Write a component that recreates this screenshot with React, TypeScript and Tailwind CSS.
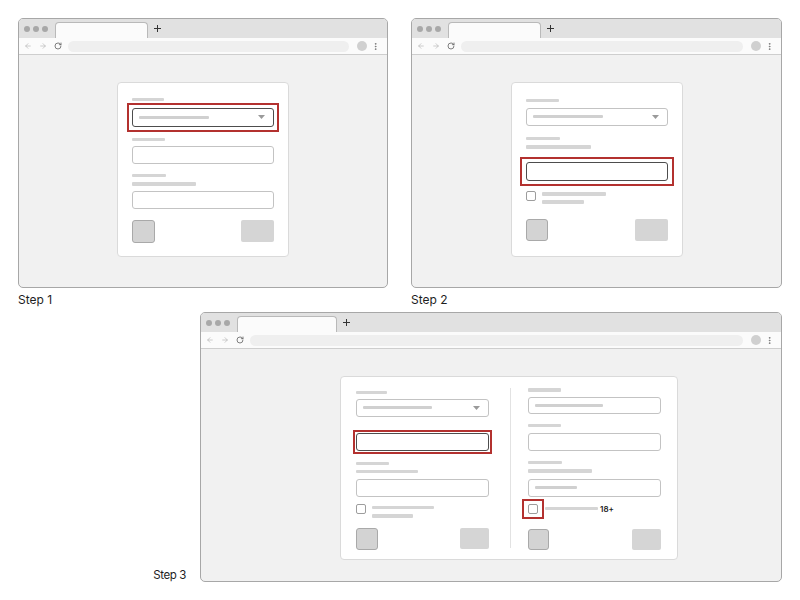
import type { ReactNode } from "react";
import { ArrowLeft, ArrowRight, RotateCw, EllipsisVertical } from "lucide-react";
import clsx from "clsx";

function Bar({ className }: { className: string }) {
  return <div className={clsx("rounded-[1px] bg-[#d5d5d5]", className)} />;
}

// sharp red highlight frame drawn around a control, without moving the flow
function Mark({ className, children }: { className: string; children: ReactNode }) {
  return <div className={clsx("border-2 border-[#b3312f]", className)}>{children}</div>;
}

function Field({
  className,
  dark,
  fill,
  select,
}: {
  className?: string;
  dark?: boolean;
  fill?: string;
  select?: boolean;
}) {
  return (
    <div
      className={clsx(
        "flex w-full items-center rounded-[3px] border bg-white pl-[6px] pr-[8px]",
        dark ? "border-[#4d4d4d]" : "border-[#c3c3c3]",
        className,
      )}
    >
      {fill ? <div className={clsx("h-[3px] rounded-[1px] bg-[#d0d0d0]", fill)} /> : null}
      {select ? (
        <svg className="ml-auto" width="7" height="4" viewBox="0 0 7 4">
          <path d="M0 0 L7 0 L3.5 4 Z" fill="#9a9a9a" />
        </svg>
      ) : null}
    </div>
  );
}

function Check({ className }: { className?: string }) {
  return <div className={clsx("h-[10px] w-[10px] shrink-0 rounded-[2px] border border-[#9d9d9d] bg-white", className)} />;
}

function Buttons({ className, left, right }: { className: string; left: string; right: string }) {
  return (
    <div className={clsx("flex items-start justify-between", className)}>
      <div className={clsx("rounded-[3px] border border-[#a9a9a9] bg-[#d3d3d3]", left)} />
      <div className={clsx("rounded-[2px] bg-[#d5d5d5]", right)} />
    </div>
  );
}

function Browser({
  className,
  tabClass,
  contentClass,
  children,
}: {
  className: string;
  tabClass: string;
  contentClass: string;
  children: ReactNode;
}) {
  return (
    <div className={clsx("flex flex-col overflow-hidden rounded-[5px] border border-[#a7a7a7] bg-[#f1f1f1]", className)}>
      <div className="flex h-[19px] shrink-0 items-end bg-[#e1e1e1]">
        <div className="ml-[5px] flex gap-[3px] self-center">
          <div className="h-[6px] w-[6px] rounded-full bg-[#a8a8a8]" />
          <div className="h-[6px] w-[6px] rounded-full bg-[#a8a8a8]" />
          <div className="h-[6px] w-[6px] rounded-full bg-[#a8a8a8]" />
        </div>
        <div className={clsx("ml-[7px] h-[16px] rounded-t-[4px] border border-b-0 border-[#b9b9b9] bg-[#fbfbfb]", tabClass)} />
        <svg className="ml-[6px] self-center" width="7" height="7" viewBox="0 0 7 7">
          <path d="M3.5 0 V7 M0 3.5 H7" stroke="#333" strokeWidth="1" />
        </svg>
      </div>
      <div className="flex h-[17px] shrink-0 items-center border-b border-[#cecece] bg-[#fbfbfb] pl-[5px] pr-[7px]">
        <ArrowLeft className="h-[8px] w-[8px] text-[#b5b5b5]" strokeWidth={2} />
        <ArrowRight className="ml-[7px] h-[8px] w-[8px] text-[#b5b5b5]" strokeWidth={2} />
        <RotateCw className="ml-[7px] h-[8px] w-[8px] text-[#666]" strokeWidth={2.5} />
        <div className="ml-[6px] h-[11px] flex-1 rounded-full bg-[#efefef]" />
        <div className="ml-[8px] h-[10px] w-[10px] rounded-full bg-[#d0d0d0]" />
        <EllipsisVertical className="ml-[4px] h-[9px] w-[9px] text-[#777]" strokeWidth={2.5} />
      </div>
      <div className={clsx("flex flex-1", contentClass)}>{children}</div>
    </div>
  );
}

function Card1() {
  return (
    <div className="flex h-[175px] w-[172px] flex-col rounded-[4px] border border-[#dadada] bg-white px-[14px] pt-[15px]">
      <Bar className="h-[3px] w-[32px]" />
      <Mark className="-mx-[5px] mt-[2px] -mb-[5px] p-[3px]">
        <Field className="h-[19px]" dark select fill="w-[70px]" />
      </Mark>
      <Bar className="mt-[11px] h-[3px] w-[33px]" />
      <Field className="mt-[5px] h-[18px]" />
      <Bar className="mt-[10px] h-[3px] w-[34px]" />
      <Bar className="mt-[5px] h-[4px] w-[64px]" />
      <Field className="mt-[5px] h-[18px]" />
      <Buttons className="mt-[11px]" left="h-[23px] w-[23px]" right="h-[22px] w-[33px]" />
    </div>
  );
}

function Card2() {
  return (
    <div className="flex h-[175px] w-[172px] flex-col rounded-[4px] border border-[#dadada] bg-white px-[14px] pt-[16px]">
      <Bar className="h-[3px] w-[33px]" />
      <Field className="mt-[6px] h-[18px]" select fill="w-[70px]" />
      <Bar className="mt-[11px] h-[3px] w-[34px]" />
      <Bar className="mt-[5px] h-[4px] w-[65px]" />
      <Mark className="-mx-[6px] mt-[8px] -mb-[5px] px-[4px] py-[3px]">
        <Field className="h-[19px]" dark />
      </Mark>
      <div className="mt-[10px] flex items-start">
        <Check />
        <div className="ml-[6px] flex flex-col pt-[1px]">
          <Bar className="h-[4px] w-[64px]" />
          <Bar className="mt-[4px] h-[4px] w-[42px]" />
        </div>
      </div>
      <Buttons className="mt-[15px]" left="h-[22px] w-[22px]" right="h-[22px] w-[33px]" />
    </div>
  );
}

function Card3() {
  return (
    <div className="flex h-[184px] w-[338px] items-start rounded-[4px] border border-[#dadada] bg-white pl-[15px]">
      <div className="flex w-[133px] flex-col pt-[14px]">
        <Bar className="h-[3px] w-[31px]" />
        <Field className="mt-[5px] h-[18px]" select fill="w-[69px]" />
        <Mark className="-mx-[3px] mt-[13px] -mb-[3px] px-[1px] py-[1px]">
          <Field className="h-[18px]" dark />
        </Mark>
        <Bar className="mt-[11px] h-[3px] w-[33px]" />
        <Bar className="mt-[5px] h-[3px] w-[62px]" />
        <Field className="mt-[6px] h-[18px]" />
        <div className="mt-[7px] flex items-start">
          <Check />
          <div className="ml-[6px] flex flex-col pt-[2px]">
            <Bar className="h-[3px] w-[62px]" />
            <Bar className="mt-[5px] h-[4px] w-[41px]" />
          </div>
        </div>
        <Buttons className="mt-[10px]" left="h-[22px] w-[22px]" right="h-[21px] w-[29px]" />
      </div>
      <div className="ml-[21px] mt-[11px] h-[160px] w-px bg-[#e2e2e2]" />
      <div className="ml-[17px] flex w-[133px] flex-col pt-[11px]">
        <Bar className="h-[4px] w-[33px]" />
        <Field className="mt-[5px] h-[17px]" fill="w-[68px]" />
        <Bar className="mt-[10px] h-[3px] w-[33px]" />
        <Field className="mt-[6px] h-[18px]" />
        <Bar className="mt-[10px] h-[3px] w-[34px]" />
        <Bar className="mt-[5px] h-[4px] w-[64px]" />
        <Field className="mt-[6px] h-[18px]" fill="w-[42px]" />
        <div className="mt-[7px] flex items-center">
          <Mark className="-my-[5px] -ml-[6px] px-[4px] py-[3px]">
            <Check />
          </Mark>
          <Bar className="ml-[1px] h-[3px] w-[53px]" />
          <span className="ml-[2px] font-['Inter',sans-serif] text-[8px] font-semibold leading-none text-[#222]">18+</span>
        </div>
        <Buttons className="mt-[15px]" left="h-[21px] w-[21px]" right="h-[21px] w-[29px]" />
      </div>
    </div>
  );
}

export default function App() {
  return (
    <div className="h-[600px] w-[800px] overflow-hidden bg-white pl-[18px] pt-[18px] font-['Inter',sans-serif]">
      <div className="flex gap-[23px]">
        <div className="flex w-[370px] flex-col">
          <Browser className="h-[270px] w-[370px]" tabClass="w-[93px]" contentClass="items-center justify-center pb-[4px]">
            <Card1 />
          </Browser>
          <div className="mt-[4px] text-[12px] leading-[16px] text-[#1e1e1e]">Step 1</div>
        </div>
        <div className="flex w-[371px] flex-col">
          <Browser className="h-[270px] w-[371px]" tabClass="w-[93px]" contentClass="items-center justify-center pb-[4px]">
            <Card2 />
          </Browser>
          <div className="mt-[4px] text-[12px] leading-[16px] text-[#1e1e1e]">Step 2</div>
        </div>
      </div>
      <div className="mt-[4px] flex items-end justify-end pr-[18px]">
        <div className="mb-[-1px] text-[11.5px] leading-[16px] tracking-[-0.4px] text-[#1e1e1e]">Step 3</div>
        <Browser className="ml-[14px] h-[270px] w-[582px]" tabClass="w-[100px]" contentClass="items-center pl-[139px] pt-[5px]">
          <Card3 />
        </Browser>
      </div>
    </div>
  );
}
